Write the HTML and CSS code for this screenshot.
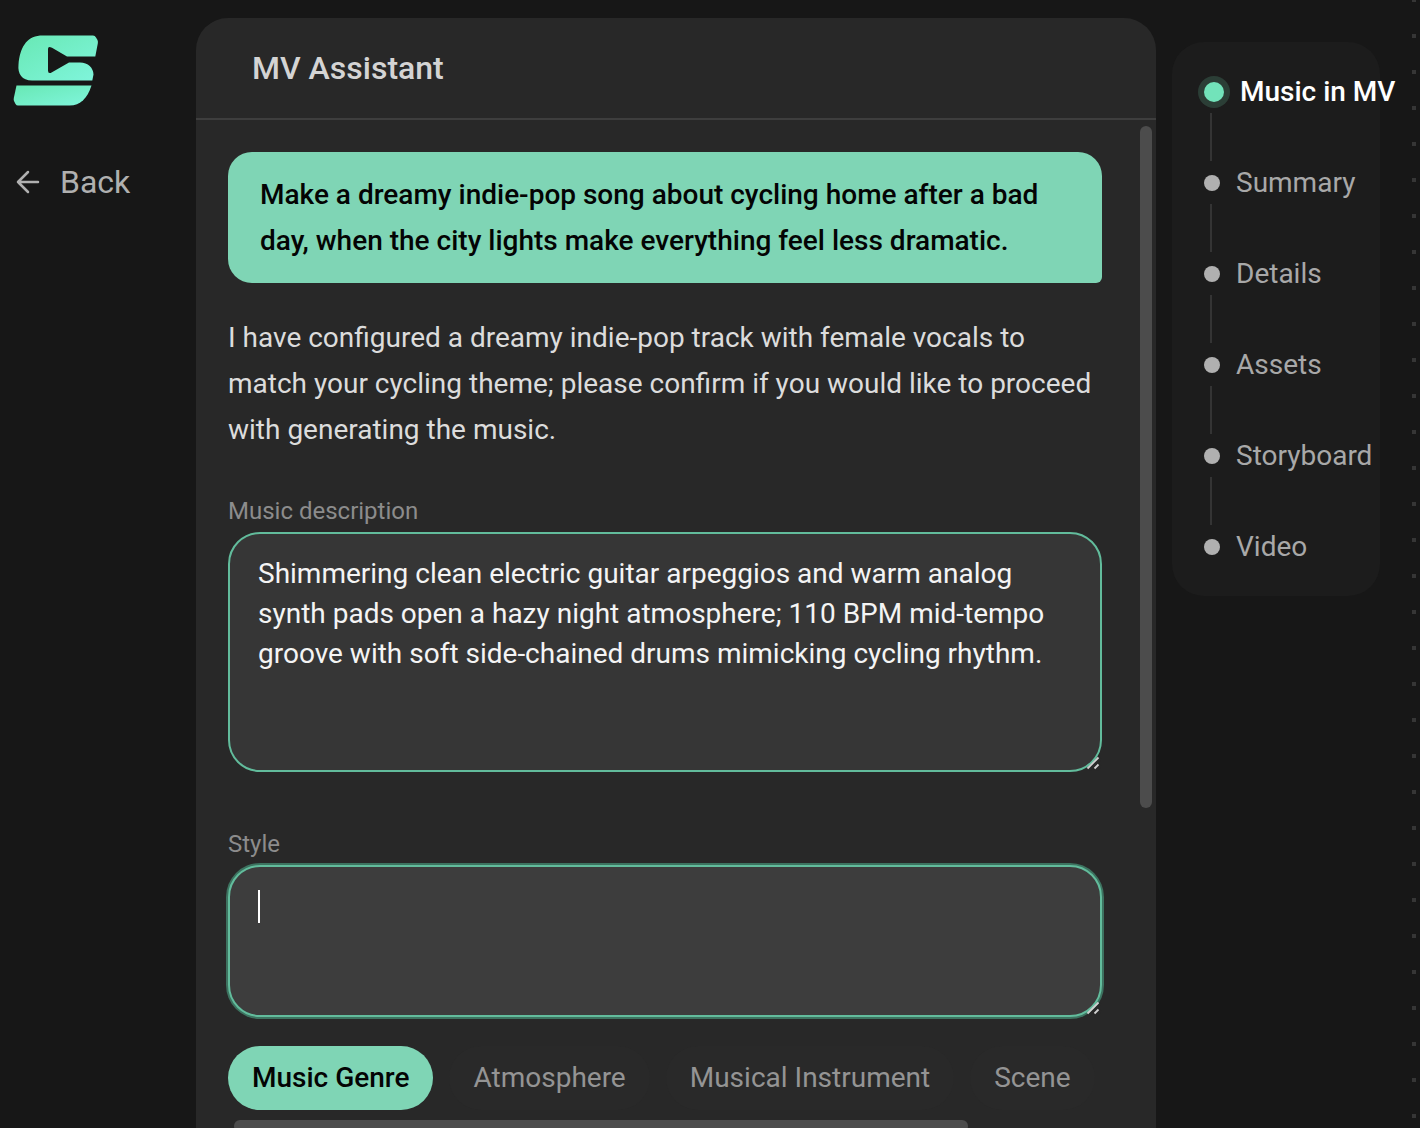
FILE: index.html
```html
<!DOCTYPE html>
<html lang="en">
<head>
    <meta charset="UTF-8">
    <meta name="viewport" content="width=device-width, initial-scale=1.0">
    <title>MV Assistant</title>
    <link rel="stylesheet" href="styles.css">
</head>
<body>
    <div class="app">
        <!-- Sidebar -->
        <aside class="sidebar">
            <a href="#home" class="logo" aria-label="Home">
                <svg width="88" height="72" viewBox="0 0 88 72">
                    <defs>
                        <linearGradient id="logo-fill" x1="0" y1="0" x2="1" y2="1">
                            <stop offset="0" stop-color="#68e8b4"/>
                            <stop offset="1" stop-color="#80f5dc"/>
                        </linearGradient>
                    </defs>
                    <path fill="url(#logo-fill)" d="M28 .5H81Q83 .5 84 2.500L85.500 5Q86.200 6.500 85.800 8.500L83.300 21.500H55L40 12.800Q36 10.500 36 14V35.500Q36 39.500 40 37.200L57 27.500H68C76 27.500 81.500 33 81.500 39.500L80.300 45.500H20C10 45.500 5.500 39 6.500 29.500C8 13 14 2 28 .5Z"/>
                    <path fill="url(#logo-fill)" d="M4.500 50.500H79.500C75.500 63 68.500 70.500 57.500 70.500H6Q4.500 70.500 3.500 69L2 66Q1.500 65 1.800 63Z"/>
                </svg>
            </a>
            <a href="#back" class="back">
                <svg width="24" height="24" viewBox="0 0 24 24" fill="none" stroke="currentColor" stroke-width="2.500" stroke-linecap="round" stroke-linejoin="round">
                    <path d="M22 12H2M12 2L2 12L12 22"/>
                </svg>
                <span>Back</span>
            </a>
        </aside>

        <!-- Chat panel -->
        <main class="panel">
            <header class="panel-header">
                <h1>MV Assistant</h1>
            </header>
            <div class="panel-body">
                <div class="chat">
                    <p class="bubble">Make a dreamy indie-pop song about cycling home after a bad day, when the city lights make everything feel less dramatic.</p>
                    <p class="reply">I have configured a dreamy indie-pop track with female vocals to match your cycling theme; please confirm if you would like to proceed with generating the music.</p>

                    <div class="field">
                        <label for="description">Music description</label>
                        <div class="input-wrap">
                            <textarea id="description" class="input-description" spellcheck="false">Shimmering clean electric guitar arpeggios and warm analog synth pads open a hazy night atmosphere; 110 BPM mid-tempo groove with soft side-chained drums mimicking cycling rhythm.</textarea>
                            <svg class="grip" width="16" height="16" viewBox="0 0 16 16" fill="none">
                                <path stroke="#282828" stroke-width="3" d="M3 15.500L15 3.500M10 15.500L15 10.500"/>
                                <path stroke="#d0d0d0" stroke-width="1.800" d="M1.500 13.500L12.500 2.500M8.500 13.500L12.500 9.500"/>
                            </svg>
                        </div>
                    </div>

                    <div class="field">
                        <label for="style">Style</label>
                        <div class="input-wrap">
                            <textarea id="style" class="input-style active" spellcheck="false"></textarea>
                            <span class="caret"></span>
                            <svg class="grip" width="16" height="16" viewBox="0 0 16 16" fill="none">
                                <path stroke="#282828" stroke-width="3" d="M3 15.500L15 3.500M10 15.500L15 10.500"/>
                                <path stroke="#d0d0d0" stroke-width="1.800" d="M1.500 13.500L12.500 2.500M8.500 13.500L12.500 9.500"/>
                            </svg>
                        </div>
                    </div>

                    <div class="tabs">
                        <button type="button" class="tab selected">Music Genre</button>
                        <button type="button" class="tab">Atmosphere</button>
                        <button type="button" class="tab">Musical Instrument</button>
                        <button type="button" class="tab">Scene</button>
                    </div>
                    <div class="tabs-scrollbar"></div>
                </div>
                <div class="scrollbar"></div>
            </div>
        </main>

        <!-- Steps -->
        <div class="canvas">
            <nav class="steps">
                <ol>
                    <li class="current"><a href="#music">Music in MV</a></li>
                    <li><a href="#summary">Summary</a></li>
                    <li><a href="#details">Details</a></li>
                    <li><a href="#assets">Assets</a></li>
                    <li><a href="#storyboard">Storyboard</a></li>
                    <li><a href="#video">Video</a></li>
                </ol>
            </nav>
            <div class="dots"></div>
        </div>
    </div>
</body>
</html>
```
FILE: styles.css
```css
/* General Styles */
* {
    box-sizing: border-box;
}

body {
    margin: 0;
    font-family: Roboto, sans-serif;
    font-size: 28px;
    color: #dcdcdc;
    background-color: #171717;
}

h1, p, ol {
    margin: 0;
    padding: 0;
}

a {
    color: inherit;
    text-decoration: none;
}

svg {
    display: block;
}

.app {
    display: grid;
    grid-template-columns: 196px 1fr 264px;
    height: 100vh;
    overflow: hidden;
}

/* Sidebar */
.sidebar {
    display: flex;
    flex-direction: column;
    align-items: flex-start;
    gap: 55px;
    padding: 35px 0 0 12px;
}

.back {
    display: flex;
    align-items: center;
    gap: 20px;
    padding-left: 4px;
    font-size: 32px;
    line-height: 40px;
    color: #b0b0b0;
}

/* Chat panel */
.panel {
    display: flex;
    flex-direction: column;
    min-width: 0;
    min-height: 0;
    margin-top: 18px;
    background-color: #282828;
    border-radius: 32px 32px 0 0;
    overflow: hidden;
}

.panel-header {
    flex: none;
    padding: 30px 56px;
    border-bottom: 2px solid #3e3e3e;
}

.panel-header h1 {
    font-size: 32px;
    font-weight: 500;
    line-height: 40px;
    color: #d4d4d4;
}

.panel-body {
    display: flex;
    flex: 1;
    min-height: 0;
    padding-right: 4px;
    overflow: hidden;
}

.chat {
    flex: 1;
    min-width: 0;
    padding: 32px 38px 0 32px;
}

.scrollbar {
    flex: none;
    width: 12px;
    height: 682px;
    margin-top: 6px;
    border-radius: 6px;
    background-color: #4c4c4c;
}

.bubble {
    padding: 20px 32px 19px;
    border-radius: 24px 24px 6px 24px;
    background-color: #7fd5b5;
    color: #040404;
    font-weight: 500;
    line-height: 46px;
}

.reply {
    margin: 32px 0 42px;
    line-height: 46px;
}

/* Form fields */
.field + .field {
    margin-top: 56px;
}

.field label {
    display: block;
    margin-bottom: 5px;
    font-size: 24px;
    line-height: 32px;
    color: #8c8c8c;
}

.input-wrap {
    position: relative;
}

.field textarea {
    display: block;
    width: 100%;
    padding: 20px 28px;
    border: 2px solid #62bc9c;
    border-radius: 32px;
    outline: none;
    resize: none;
    background-color: #363636;
    color: #f4f4f4;
    font-family: inherit;
    font-size: 28px;
    line-height: 40px;
}

.field .input-description {
    height: 240px;
}

.field .input-style {
    height: 152px;
}

.field textarea.active {
    background-color: #3d3d3d;
    box-shadow: 0 0 0 2px #3d7360;
    caret-color: transparent;
}

.caret {
    position: absolute;
    top: 25px;
    left: 30px;
    width: 2px;
    height: 33px;
    background-color: #fff;
}

.grip {
    position: absolute;
    right: 0;
    bottom: 1px;
}

/* Tabs */
.tabs {
    display: flex;
    gap: 16px;
    margin-top: 29px;
}

.tab {
    flex: none;
    height: 64px;
    padding: 0 24px 2px;
    border: none;
    border-radius: 32px;
    background-color: #292929;
    color: #949494;
    font-family: inherit;
    font-size: 28px;
    cursor: pointer;
}

.tab.selected {
    background-color: #7fd5b5;
    color: #040404;
    font-weight: 500;
}

.tabs-scrollbar {
    width: 84%;
    height: 12px;
    margin: 10px 0 0 6px;
    border-radius: 6px;
    background-color: #4c4c4c;
}

/* Steps */
.canvas {
    display: flex;
    justify-content: space-between;
    align-items: flex-start;
    padding-left: 16px;
}

.steps {
    width: 208px;
    margin-top: 42px;
    padding: 30px 0 29px 32px;
    border-radius: 32px;
    background-color: #1c1c1c;
    color: #a8a8a8;
}

.steps ol {
    display: flex;
    flex-direction: column;
    gap: 51px;
    list-style: none;
}

.steps li {
    position: relative;
}

.steps a {
    display: flex;
    align-items: center;
    gap: 16px;
    line-height: 40px;
    white-space: nowrap;
}

.steps a::before {
    content: "";
    flex: none;
    width: 16px;
    height: 16px;
    border-radius: 50%;
    background-color: #b0b0b0;
}

/* line between two steps */
.steps li:not(:last-child)::after {
    content: "";
    position: absolute;
    top: 41px;
    left: 6px;
    width: 2px;
    height: 48px;
    background-color: #343434;
}

.steps .current a {
    color: #fff;
    font-weight: 500;
}

.steps .current a::before {
    width: 20px;
    height: 20px;
    background-color: #72e3ba;
    box-shadow: 0 0 0 6px #2b3e36;
}

/* dotted canvas grid */
.dots {
    width: 8px;
    height: 100vh;
    background-image: linear-gradient(#363636 4px, transparent 4px);
    background-size: 4px 36px;
    background-position: 0 34px;
    background-repeat: repeat-y;
}
```
